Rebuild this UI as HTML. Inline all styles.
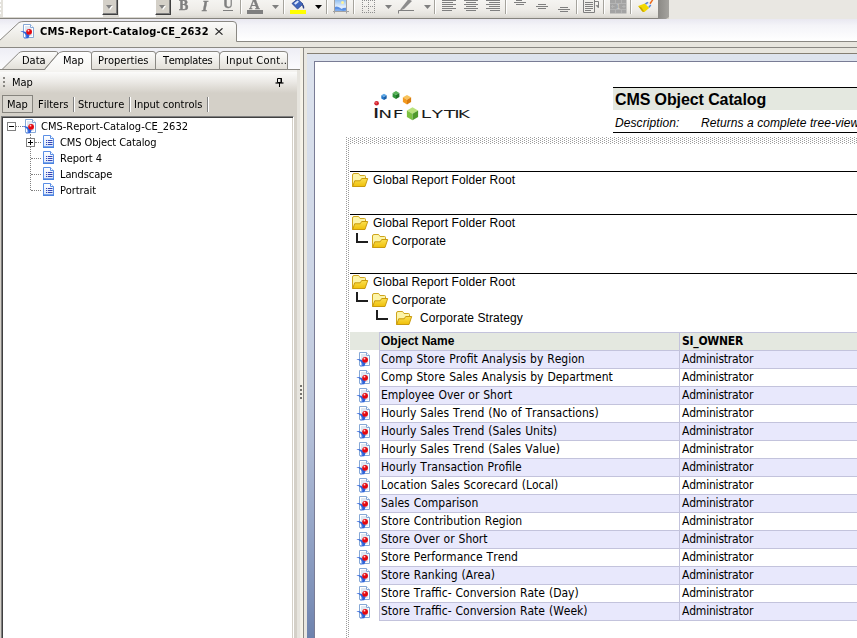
<!DOCTYPE html>
<html>
<head>
<meta charset="utf-8">
<title>CMS-Report-Catalog-CE_2632</title>
<style>
*{box-sizing:border-box;margin:0;padding:0}
html,body{width:857px;height:638px;overflow:hidden;background:#d4d0c8}
body{position:relative;font-family:"DejaVu Sans Condensed","DejaVu Sans","Liberation Sans",sans-serif;font-size:11px;color:#000}
.a{position:absolute}
.ui{font-kerning:none;will-change:transform;font-family:"DejaVu Sans Condensed","DejaVu Sans","Liberation Sans",sans-serif;font-size:11px;white-space:nowrap;line-height:14px;color:#000}
.ar{font-family:"Liberation Sans",sans-serif;white-space:nowrap;font-size:12px;line-height:14px;letter-spacing:.08px;color:#000}
.tx{font-kerning:none;word-spacing:.5px;font-family:"DejaVu Sans Condensed","DejaVu Sans","Liberation Sans",sans-serif;font-size:12px;white-space:nowrap;line-height:16px;color:#000}
#tb{left:0;top:0;width:658px;height:19px;background:linear-gradient(#f5f4f1,#efede9 50%,#e3e1db 85%,#d6d3cc);border-bottom:1px solid #85837d;overflow:hidden}
#tbend{left:658px;top:0;width:11px;height:19px;background:linear-gradient(90deg,#8b8985,#a5a39f);clip-path:polygon(0 0,100% 0,100% 17px,8px 19px,0 19px)}
#tbrest{left:669px;top:0;width:188px;height:19px;background:#e9e7e2}
.combo{top:0;height:17px;background:#fff}
.cbtn{top:-1px;height:16px;width:16px;background:#d4d0c8;border:1px solid;border-color:#fff #404040 #404040 #fff;box-shadow:inset -1px -1px 0 #808080}
.cbtn:before{content:"";position:absolute;left:4px;top:6px;border:3.5px solid transparent;border-top:4px solid #fff;border-bottom:0}
.cbtn:after{content:"";position:absolute;left:3px;top:5px;border:3.5px solid transparent;border-top:4px solid #808080;border-bottom:0}
.sep{top:0;width:2px;height:14px;border-left:1px solid #a5a39c;border-right:1px solid #fff}
#dt{left:0;top:19px;width:857px;height:22px;background:linear-gradient(#e9e8f1,#f4f4f8 30%,#ffffff)}
#dtl1{left:0;top:41px;width:857px;height:1px;background:#8a8883}
#dtb{left:0;top:42px;width:857px;height:5px;background:#e8e6df}
#dtl2{left:0;top:47px;width:857px;height:1px;background:#8a8883}
#lp{left:0;top:48px;width:297px;height:590px;background:#d4d0c8}
#lts{left:0;top:48px;width:300px;height:21px;background:linear-gradient(#eeeef5,#fbfbfd)}
#ltl{left:0;top:69px;width:300px;height:1px;background:#8a8883}
#lth{left:0;top:70px;width:300px;height:2px;background:#f4f3f0}
#mh{left:0;top:72px;width:297px;height:21px;background:linear-gradient(#fbfbfa,#eceae6 45%,#d4d0c8)}
#tree{left:1px;top:116px;width:293px;height:530px;background:#fff;border:1px solid #808080;border-right:1px solid #fff;box-shadow:inset 1px 1px 0 #404040,inset -1px 0 0 #d4d0c8}
#sp{left:297px;top:70px;width:10px;height:570px;background:linear-gradient(90deg,#e6e4de 0,#e6e4de 3px,#f1eee5 3px,#f9f6eb 6px)}
#rp{left:304px;top:48px;width:553px;height:590px;background:#e8e6df}
#rpl{left:306px;top:53px;width:551px;height:1px;background:#857f73}
#rpb{left:307px;top:54px;width:550px;height:584px;background:linear-gradient(#dee4ee 0,#cbd4e5 42.1%,#bfc9dd 56.7%,#b2bed7 66.1%,#98a8c9 79.8%,#7d90b8 93.5%,#6d82ad 100%)}
#pg{left:314px;top:61px;width:560px;height:600px;background:#fff;border:1px solid #797c95}
.dots{background-image:radial-gradient(circle at 0.5px 0.5px,#9a9a9a 0.6px,transparent 0.7px),radial-gradient(circle at 0.5px 0.5px,#9a9a9a 0.6px,transparent 0.7px);background-size:2px 2px;background-position:0 0,1px 1px}
.hl{height:1px;background:#000;left:350px;width:507px}
.rowbg{left:380px;width:477px;height:17px}
.bl{background:#c3c3dc}
</style>
</head>
<body>
<div class="a" id="tb"></div><div class="a" id="tbend"></div><div class="a" id="tbrest"></div>
<div class="a" style="left:0;top:0;width:3px;height:17px;background:#e4e2dc"></div>
<div class="a" style="left:0;top:0px;width:1px;height:2px;background:#fff"></div><div class="a" style="left:0;top:4px;width:1px;height:2px;background:#fff"></div><div class="a" style="left:0;top:8px;width:1px;height:2px;background:#fff"></div><div class="a" style="left:0;top:12px;width:1px;height:2px;background:#fff"></div>
<div class="a combo" style="left:3px;width:100px"></div><div class="a cbtn" style="left:102px"></div>
<div class="a combo" style="left:119px;width:37px"></div><div class="a cbtn" style="left:155px"></div>
<div class="a" style="will-change:transform;left:179px;top:-2px;font:bold 14px/16px 'Liberation Serif',serif;color:#7f7f7f;-webkit-text-stroke:.4px #7f7f7f">B</div>
<div class="a" style="will-change:transform;left:202px;top:-2px;font:italic bold 15px/16px 'Liberation Serif',serif;color:#7f7f7f;-webkit-text-stroke:.4px #7f7f7f">I</div>
<div class="a" style="will-change:transform;left:222.500px;top:-4px;font:bold 14px/16px 'Liberation Serif',serif;color:#7f7f7f;-webkit-text-stroke:.3px #7f7f7f">U</div>
<div class="a" style="will-change:transform;left:223px;top:10px;width:10px;height:1px;background:#7f7f7f"></div>
<div class="a sep" style="left:240px"></div>
<div class="a" style="will-change:transform;left:249px;top:-4px;font:bold 15px/16px 'Liberation Serif',serif;color:#7f7f7f;-webkit-text-stroke:.3px #7f7f7f">A</div>
<div class="a" style="will-change:transform;left:247px;top:10px;width:16px;height:4px;background:#7f7f7f"></div>
<svg class="a" style="left:272px;top:5px" width="7" height="4" viewBox="0 0 7 4"><path d="M0 0 H7 L3.500 4 Z" fill="#7f7f7f"/></svg>
<div class="a sep" style="left:283px"></div>
<svg class="a" style="left:289px;top:0" width="18" height="14" viewBox="0 0 18 14"><path d="M3 3.500 L8.500 -1 L14 4 L8.500 9 Z" fill="#3f66bd" stroke="#27408a" stroke-width=".8"/><path d="M5 3.300 L8.500 0.400 L10 1.800 L6.500 4.800 Z" fill="#dbe6fb"/><path d="M13.500 4 Q16 6 15 9 Q13.500 8 13 5 Z" fill="#27408a"/><rect x="1" y="10" width="16" height="4" fill="#ffff00"/></svg>
<svg class="a" style="left:315px;top:5px" width="7" height="4" viewBox="0 0 7 4"><path d="M0 0 H7 L3.500 4 Z" fill="#000"/></svg>
<div class="a sep" style="left:326px"></div>
<svg class="a" style="left:332px;top:0" width="18" height="14" viewBox="0 0 18 14"><defs><linearGradient id="sky" x1="0" y1="0" x2="0" y2="1"><stop offset="0" stop-color="#86b8ef"/><stop offset=".62" stop-color="#e4effc"/><stop offset="1" stop-color="#cfe2fa"/></linearGradient></defs><rect x="2.500" y="-1" width="12" height="12.500" fill="url(#sky)"/><path d="M2.500 7.200 Q4.500 6 6.500 7 T9.500 9 Q11 7.600 14.500 7.800 V11.500 H2.500 Z" fill="#5a90e4"/><path d="M2.500 9.500 Q6 8.500 9 10 T14.500 9.500 V11.500 H2.500 Z" fill="#7fabec"/><circle cx="10.500" cy="2.500" r="1.500" fill="#fdf49c"/><path d="M2.500 -1 V13.500 M14.500 -1 V13.500" stroke="#a2a2a2"/><path d="M1 11.500 H17" stroke="#a2a2a2"/></svg>
<div class="a sep" style="left:353px"></div>
<svg class="a" style="left:362px;top:0" width="13" height="13" viewBox="0 0 13 13" shape-rendering="crispEdges"><g fill="#8e8e8e"><rect x="0" y="0" width="1" height="1"/><rect x="2" y="0" width="1" height="1"/><rect x="4" y="0" width="1" height="1"/><rect x="6" y="0" width="1" height="1"/><rect x="8" y="0" width="1" height="1"/><rect x="10" y="0" width="1" height="1"/><rect x="12" y="0" width="1" height="1"/><rect x="0" y="6" width="1" height="1"/><rect x="2" y="6" width="1" height="1"/><rect x="4" y="6" width="1" height="1"/><rect x="6" y="6" width="1" height="1"/><rect x="8" y="6" width="1" height="1"/><rect x="10" y="6" width="1" height="1"/><rect x="12" y="6" width="1" height="1"/><rect x="0" y="12" width="1" height="1"/><rect x="2" y="12" width="1" height="1"/><rect x="4" y="12" width="1" height="1"/><rect x="6" y="12" width="1" height="1"/><rect x="8" y="12" width="1" height="1"/><rect x="10" y="12" width="1" height="1"/><rect x="12" y="12" width="1" height="1"/><rect x="0" y="2" width="1" height="1"/><rect x="0" y="4" width="1" height="1"/><rect x="0" y="8" width="1" height="1"/><rect x="0" y="10" width="1" height="1"/><rect x="6" y="2" width="1" height="1"/><rect x="6" y="4" width="1" height="1"/><rect x="6" y="8" width="1" height="1"/><rect x="6" y="10" width="1" height="1"/><rect x="12" y="2" width="1" height="1"/><rect x="12" y="4" width="1" height="1"/><rect x="12" y="8" width="1" height="1"/><rect x="12" y="10" width="1" height="1"/></g></svg>
<svg class="a" style="left:385px;top:5px" width="7" height="4" viewBox="0 0 7 4"><path d="M0 0 H7 L3.500 4 Z" fill="#7f7f7f"/></svg>
<svg class="a" style="left:397px;top:0" width="18" height="14" viewBox="0 0 18 14"><path d="M4 8.500 L11.500 -1 L15 1 L7 9 Z" fill="#8c8c8c"/><path d="M4 8.500 L3.300 10 L7 9 Z" fill="#666"/><path d="M1.500 13.500 V10.500 H17" fill="none" stroke="#7f7f7f"/></svg>
<svg class="a" style="left:424px;top:5px" width="7" height="4" viewBox="0 0 7 4"><path d="M0 0 H7 L3.500 4 Z" fill="#7f7f7f"/></svg>
<div class="a sep" style="left:434px"></div>
<svg class="a" style="left:441px;top:0" width="16" height="14" viewBox="0 0 16 14"><path d="M1 0.5 H15 M1 2.5 H12 M1 4.5 H15 M1 6.5 H12 M1 8.5 H15 M1 10.5 H11 " stroke="#7f7f7f" stroke-width="1" fill="none"/></svg>
<svg class="a" style="left:463px;top:0" width="16" height="14" viewBox="0 0 16 14"><path d="M1 0.5 H15 M3 2.5 H13 M1 4.5 H15 M3 6.5 H13 M1 8.5 H15 M3 10.5 H13 " stroke="#7f7f7f" stroke-width="1" fill="none"/></svg>
<svg class="a" style="left:485px;top:0" width="16" height="14" viewBox="0 0 16 14"><path d="M1 0.5 H15 M4 2.5 H15 M1 4.5 H15 M4 6.5 H15 M1 8.5 H15 M5 10.5 H15 " stroke="#7f7f7f" stroke-width="1" fill="none"/></svg>
<div class="a sep" style="left:505px"></div>
<svg class="a" style="left:512px;top:0" width="16" height="14" viewBox="0 0 16 14"><path d="M4 0.5 H10 M2 2.5 H14 M4 4.5 H12 " stroke="#7f7f7f" stroke-width="1" fill="none"/></svg>
<svg class="a" style="left:534px;top:0" width="16" height="14" viewBox="0 0 16 14"><path d="M4 4.5 H12 M2 6.5 H14 M4 8.5 H12 " stroke="#7f7f7f" stroke-width="1" fill="none"/></svg>
<svg class="a" style="left:556px;top:0" width="16" height="14" viewBox="0 0 16 14"><path d="M4 7.5 H12 M2 9.5 H14 M4 11.5 H12 " stroke="#7f7f7f" stroke-width="1" fill="none"/></svg>
<div class="a sep" style="left:576px"></div>
<svg class="a" style="left:582px;top:0" width="19" height="14" viewBox="0 0 19 14"><path d="M1.500 -1 V12.500 H12.500 V-1" fill="#efeeea" stroke="#7f7f7f"/><path d="M3 2.500 H11 M3 4.500 H11 M3 6.500 H11 M3 8.500 H11 M3 10.500 H9" stroke="#7f7f7f"/><path d="M12.500 1.500 H16.500 V7" fill="none" stroke="#7f7f7f"/><path d="M14 5.500 L16.500 8 V5.500 Z" fill="#7f7f7f" stroke="#7f7f7f" stroke-width=".6"/></svg>
<div class="a sep" style="left:603px"></div>
<svg class="a" style="left:610px;top:0" width="17" height="14" viewBox="0 0 17 14"><rect x="0" y="-1" width="16.500" height="14.500" fill="#a3a3a3"/><g stroke="#b4b4b4" stroke-width="1" fill="none"><path d="M5.500 0 V3 M11.500 0 V3 M5.500 10 V13 M11.500 10 V13 M0 3.500 H16 M0 9.500 H16"/><path d="M1 6.500 H4.500 M12 6.500 H15.500 M2.500 5 V8 M14 5 V8"/></g><text x="6.200" y="9" font-family="Liberation Sans, sans-serif" font-size="7" fill="#d0d0d0">1</text></svg>
<div class="a sep" style="left:630px"></div>
<svg class="a" style="left:637px;top:0" width="18" height="13" viewBox="0 0 18 13"><path d="M12.300 3.300 L15.500 -1 L16.600 -0.300 L13.600 4.300 Z" fill="#ee6a1a"/><path d="M7.800 3.600 L10.400 1.800 L14.300 5.600 L12.200 7.900 Z" fill="#e4ecf9"/><path d="M10.400 1.800 L11.600 2.800 L9 4.700 L7.800 3.600 Z" fill="#5b86d6"/><path d="M13.200 4.600 L14.300 5.600 L12.200 7.900 L11.200 7 Z" fill="#5b86d6"/><path d="M1.200 6 L7.800 3.600 L12.200 7.900 L7.400 12 L5.300 11.600 Z" fill="#f2d800"/><path d="M1.200 6 L5.300 11.600 L7.400 12 L4.500 7.600 Z" fill="#c6a400"/></svg>
<div class="a" id="dt"></div><div class="a" id="dtl1"></div><div class="a" id="dtb"></div><div class="a" id="dtl2"></div>
<svg class="a" style="left:0;top:18px" width="240" height="24" viewBox="0 0 240 24"><defs><linearGradient id="tg" x1="0" y1="0" x2="0" y2="1"><stop offset="0" stop-color="#fbfbfa"/><stop offset="1" stop-color="#e8e6df"/></linearGradient></defs><path d="M-2 24 L19 4.500 Q21 3.500 24 3.500 L233 3.500 Q236.500 3.500 236.500 7 L236.500 24 Z" fill="url(#tg)" stroke="none"/><path d="M-2 24 L19 4.500 Q21 3.500 24 3.500 L233 3.500 Q236.500 3.500 236.500 7 L236.500 23.500" fill="none" stroke="#8a8883" stroke-width="1"/></svg>
<svg class="a" style="left:20px;top:24px" width="15" height="15" viewBox="0 0 15 15"><path d="M3.500 0.500 L10.500 0.500 L13.500 3.500 L13.500 13.500 L3.500 13.500 Z" fill="#fff" stroke="#86a8d6" stroke-width="1"/><path d="M5 2 H10 V4.500 H12 V12 H5 Z" fill="#dfe7f2"/><path d="M10.500 0.500 L10.500 3.500 L13.500 3.500" fill="#fff" stroke="#86a8d6" stroke-width="1"/><path d="M0.800 6.900 C3.500 6.800 6.500 7.600 8.600 10.200 L9.600 11.200 L8.300 14.200 L4 14.400 C5.800 13 6.300 11.800 5.300 10.400 C4.200 8.800 2.500 7.700 0.800 7.500 Z" fill="#2e63d9"/><path d="M4 14.400 C5.800 13 6.300 11.800 5.300 10.400 L6.500 12 L6 14.300 Z" fill="#7ea6ee"/><circle cx="9.100" cy="7.800" r="2.900" fill="#e5080f"/><circle cx="8.500" cy="6.700" r="0.900" fill="#ffd0d0"/></svg>
<div class="a ui" style="left:40px;top:25px;font-weight:bold;letter-spacing:.2px">CMS-Report-Catalog-CE_2632</div>
<svg class="a" style="left:215px;top:28px" width="8" height="7" viewBox="0 0 8 7"><path d="M0.500 0.300 L7.500 6.700 M7.500 0.300 L0.500 6.700" stroke="#2a2a2a" stroke-width="1.150" fill="none"/></svg>
<div class="a" id="lp"></div><div class="a" id="lts"></div><div class="a" id="ltl"></div><div class="a" id="lth"></div><div class="a" id="mh"></div>
<svg class="a" style="left:0;top:48px" width="300" height="23" viewBox="0 0 300 23">
<defs><linearGradient id="lg" x1="0" y1="0" x2="0" y2="1"><stop offset="0" stop-color="#fdfdfc"/><stop offset="1" stop-color="#e2dfd8"/></linearGradient>
<linearGradient id="lgs" x1="0" y1="0" x2="0" y2="1"><stop offset="0" stop-color="#ffffff"/><stop offset="1" stop-color="#f6f5f2"/></linearGradient></defs>
<path d="M2 21.500 L18.500 5.300 Q20.300 3.500 23 3.500 L55 3.500 Q59 3.500 57.200 6.300 L44.500 21.500 Z" fill="url(#lg)" stroke="#8a8883"/>
<path d="M91.500 21.500 L91.500 6 Q91.500 3.500 94 3.500 L153 3.500 Q155.500 3.500 155.500 6 L155.500 21.500 Z" fill="url(#lg)" stroke="#8a8883"/>
<path d="M155.500 21.500 L155.500 7 Q156 4 159 3.500 L217 3.500 Q219.500 3.500 219.500 6 L219.500 21.500 Z" fill="url(#lg)" stroke="#8a8883"/>
<path d="M219.500 21.500 L219.500 7 Q220 4 223 3.500 L284 3.500 Q287.500 3.500 287.500 6 L287.500 21.500 Z" fill="url(#lg)" stroke="#8a8883"/>
<path d="M44.500 22.500 L57 7 Q59.500 3.500 63 3.500 L88 3.500 Q91.500 3.500 91.500 6 L91.500 22.500 Z" fill="url(#lgs)" stroke="none"/>
<path d="M44.500 21.500 L57 7 Q59.500 3.500 63 3.500 L88 3.500 Q91.500 3.500 91.500 6 L91.500 21.500" fill="none" stroke="#8a8883"/>
</svg>
<div class="a ui" style="left:22px;top:54px;letter-spacing:0">Data</div>
<div class="a ui" style="left:63px;top:54px;letter-spacing:0">Map</div>
<div class="a ui" style="left:98px;top:54px;letter-spacing:0">Properties</div>
<div class="a ui" style="left:163px;top:54px;letter-spacing:-.3px">Templates</div>
<div class="a ui" style="left:226px;top:54px;letter-spacing:.25px">Input Cont..</div>
<div class="a" style="left:3px;top:77px;width:2px;height:2px;background:#8a8883"></div><div class="a" style="left:3px;top:81px;width:2px;height:2px;background:#8a8883"></div><div class="a" style="left:3px;top:85px;width:2px;height:2px;background:#8a8883"></div>
<div class="a ui" style="left:12px;top:76px">Map</div>
<svg class="a" style="left:275px;top:76px" width="9" height="12" viewBox="0 0 9 12"><path d="M2.500 2.500 H6.500 V6.500 H2.500 Z" fill="none" stroke="#000"/><path d="M6 2 V7" stroke="#000"/><path d="M0.500 7 H8.500" stroke="#000" stroke-width="1.200"/><path d="M4.500 7 V11" stroke="#000"/></svg>
<div class="a" style="left:2px;top:95px;width:31px;height:18px;border:1px solid #86847e;background:#d9d6cf"></div>
<div class="a ui" style="left:7px;top:98px">Map</div>
<div class="a ui" style="left:38px;top:98px">Filters</div>
<div class="a ui" style="left:78px;top:98px">Structure</div>
<div class="a ui" style="left:134px;top:98px">Input controls</div>
<div class="a" style="left:73px;top:97px;width:2px;height:15px;border-left:1px solid #808080;border-right:1px solid #fff"></div>
<div class="a" style="left:129px;top:97px;width:2px;height:15px;border-left:1px solid #808080;border-right:1px solid #fff"></div>
<div class="a" style="left:207px;top:97px;width:2px;height:15px;border-left:1px solid #808080;border-right:1px solid #fff"></div>
<div class="a" id="tree"></div>
<div class="a" style="left:7px;top:122px;width:9px;height:9px;border:1px solid #808080;background:#fff"></div><div class="a" style="left:9px;top:126px;width:5px;height:1px;background:#000"></div>
<div class="a" style="left:16px;top:126px;width:7px;height:1px;border-top:1px dotted #808080"></div>
<div class="a" style="left:30px;top:134px;width:1px;height:56px;border-left:1px dotted #808080"></div>
<svg class="a" style="left:22px;top:119px" width="15" height="15" viewBox="0 0 15 15"><path d="M3.500 0.500 L10.500 0.500 L13.500 3.500 L13.500 13.500 L3.500 13.500 Z" fill="#fff" stroke="#86a8d6" stroke-width="1"/><path d="M5 2 H10 V4.500 H12 V12 H5 Z" fill="#dfe7f2"/><path d="M10.500 0.500 L10.500 3.500 L13.500 3.500" fill="#fff" stroke="#86a8d6" stroke-width="1"/><path d="M0.800 6.900 C3.500 6.800 6.500 7.600 8.600 10.200 L9.600 11.200 L8.300 14.200 L4 14.400 C5.800 13 6.300 11.800 5.300 10.400 C4.200 8.800 2.500 7.700 0.800 7.500 Z" fill="#2e63d9"/><path d="M4 14.400 C5.800 13 6.300 11.800 5.300 10.400 L6.500 12 L6 14.300 Z" fill="#7ea6ee"/><circle cx="9.100" cy="7.800" r="2.900" fill="#e5080f"/><circle cx="8.500" cy="6.700" r="0.900" fill="#ffd0d0"/></svg>
<div class="a ui" style="left:41px;top:120px">CMS-Report-Catalog-CE_2632</div>
<div class="a" style="left:26px;top:138px;width:9px;height:9px;border:1px solid #808080;background:#fff"></div><div class="a" style="left:28px;top:142px;width:5px;height:1px;background:#000"></div><div class="a" style="left:30px;top:140px;width:1px;height:5px;background:#000"></div>
<div class="a" style="left:35px;top:142px;width:6px;height:1px;border-top:1px dotted #808080"></div>
<svg class="a" style="left:43px;top:135px" width="11" height="13" viewBox="0 0 11 13"><defs><linearGradient id="pgf" x1="0" y1="0" x2="0" y2="1"><stop offset="0" stop-color="#ffffff"/><stop offset="1" stop-color="#dce8fb"/></linearGradient></defs><path d="M0.500 0.500 L7.500 0.500 L10.500 3.500 L10.500 12 L0.500 12 Z" fill="url(#pgf)" stroke="#5a8fe6" stroke-width="1"/><path d="M0 12.300 H11" stroke="#4a82e0" stroke-width="1.400"/><path d="M7.500 0.500 L7.500 3.500 L10.500 3.500" fill="#fff" stroke="#5a8fe6" stroke-width="1"/><path d="M5 5.500h4.500M5 7.500h4.500M5 9.500h4.500" stroke="#3546b5" stroke-width="1"/><path d="M3 5.500h1.200M3 7.500h1.200M3 9.500h1.200" stroke="#3546b5" stroke-width="1"/></svg>
<div class="a ui" style="left:60px;top:136px;letter-spacing:-.1px">CMS Object Catalog</div>
<svg class="a" style="left:43px;top:151px" width="11" height="13" viewBox="0 0 11 13"><defs><linearGradient id="pgf" x1="0" y1="0" x2="0" y2="1"><stop offset="0" stop-color="#ffffff"/><stop offset="1" stop-color="#dce8fb"/></linearGradient></defs><path d="M0.500 0.500 L7.500 0.500 L10.500 3.500 L10.500 12 L0.500 12 Z" fill="url(#pgf)" stroke="#5a8fe6" stroke-width="1"/><path d="M0 12.300 H11" stroke="#4a82e0" stroke-width="1.400"/><path d="M7.500 0.500 L7.500 3.500 L10.500 3.500" fill="#fff" stroke="#5a8fe6" stroke-width="1"/><path d="M5 5.500h4.500M5 7.500h4.500M5 9.500h4.500" stroke="#3546b5" stroke-width="1"/><path d="M3 5.500h1.200M3 7.500h1.200M3 9.500h1.200" stroke="#3546b5" stroke-width="1"/></svg>
<div class="a ui" style="left:60px;top:152px;letter-spacing:-.1px">Report 4</div>
<div class="a" style="left:31px;top:158px;width:10px;height:1px;border-top:1px dotted #808080"></div>
<svg class="a" style="left:43px;top:167px" width="11" height="13" viewBox="0 0 11 13"><defs><linearGradient id="pgf" x1="0" y1="0" x2="0" y2="1"><stop offset="0" stop-color="#ffffff"/><stop offset="1" stop-color="#dce8fb"/></linearGradient></defs><path d="M0.500 0.500 L7.500 0.500 L10.500 3.500 L10.500 12 L0.500 12 Z" fill="url(#pgf)" stroke="#5a8fe6" stroke-width="1"/><path d="M0 12.300 H11" stroke="#4a82e0" stroke-width="1.400"/><path d="M7.500 0.500 L7.500 3.500 L10.500 3.500" fill="#fff" stroke="#5a8fe6" stroke-width="1"/><path d="M5 5.500h4.500M5 7.500h4.500M5 9.500h4.500" stroke="#3546b5" stroke-width="1"/><path d="M3 5.500h1.200M3 7.500h1.200M3 9.500h1.200" stroke="#3546b5" stroke-width="1"/></svg>
<div class="a ui" style="left:60px;top:168px;letter-spacing:-.1px">Landscape</div>
<div class="a" style="left:31px;top:174px;width:10px;height:1px;border-top:1px dotted #808080"></div>
<svg class="a" style="left:43px;top:183px" width="11" height="13" viewBox="0 0 11 13"><defs><linearGradient id="pgf" x1="0" y1="0" x2="0" y2="1"><stop offset="0" stop-color="#ffffff"/><stop offset="1" stop-color="#dce8fb"/></linearGradient></defs><path d="M0.500 0.500 L7.500 0.500 L10.500 3.500 L10.500 12 L0.500 12 Z" fill="url(#pgf)" stroke="#5a8fe6" stroke-width="1"/><path d="M0 12.300 H11" stroke="#4a82e0" stroke-width="1.400"/><path d="M7.500 0.500 L7.500 3.500 L10.500 3.500" fill="#fff" stroke="#5a8fe6" stroke-width="1"/><path d="M5 5.500h4.500M5 7.500h4.500M5 9.500h4.500" stroke="#3546b5" stroke-width="1"/><path d="M3 5.500h1.200M3 7.500h1.200M3 9.500h1.200" stroke="#3546b5" stroke-width="1"/></svg>
<div class="a ui" style="left:60px;top:184px;letter-spacing:-.1px">Portrait</div>
<div class="a" style="left:31px;top:190px;width:10px;height:1px;border-top:1px dotted #808080"></div>
<div class="a" id="sp"></div><div class="a" style="left:300px;top:48px;width:3px;height:24px;background:#f4f1e7"></div>
<div class="a" style="left:303px;top:48px;width:1px;height:590px;background:#8a8883"></div>
<div class="a" style="left:300px;top:385px;width:2px;height:2px;background:#77756f"></div>
<div class="a" style="left:300px;top:389px;width:2px;height:2px;background:#77756f"></div>
<div class="a" style="left:300px;top:393px;width:2px;height:2px;background:#77756f"></div>
<div class="a" style="left:300px;top:397px;width:2px;height:2px;background:#77756f"></div>
<div class="a" id="rp"></div><div class="a" id="rpl"></div><div class="a" id="rpb"></div><div class="a" id="pg"></div>
<div class="a" style="left:304px;top:48px;width:3px;height:590px;background:#e9e7e0"></div>
<svg class="a" style="left:370px;top:88px" width="110" height="34" viewBox="0 0 110 34"><circle cx="6.600" cy="15.300" r="2.300" fill="#d3202a"/><circle cx="6.200" cy="14.800" r="1" fill="#e8606a"/><path d="M14.0 5.8 L16.7 7.3 L14.0 8.9 L11.3 7.3 Z" fill="#5aa7e6"/><path d="M11.3 7.3 L14.0 8.9 L14.0 12.0 L11.3 10.5 Z" fill="#2477c9"/><path d="M16.7 7.3 L16.7 10.4 L14.0 12.0 L14.0 8.9 Z" fill="#1a5fa8"/><path d="M26.0 3.1 L29.4 5.0 L26.0 7.0 L22.6 5.0 Z" fill="#56b356"/><path d="M22.6 5.0 L26.0 7.0 L26.0 10.9 L22.6 9.0 Z" fill="#2f9438"/><path d="M29.4 5.0 L29.4 8.9 L26.0 10.9 L26.0 7.0 Z" fill="#1f7428"/><path d="M37.0 7.0 L41.1 9.3 L37.0 11.7 L32.9 9.3 Z" fill="#f8c35c"/><path d="M32.9 9.3 L37.0 11.7 L37.0 16.4 L32.9 14.1 Z" fill="#f39a1f"/><path d="M41.1 9.3 L41.1 14.0 L37.0 16.4 L37.0 11.7 Z" fill="#d97d10"/><path d="M42.5 19.2 L48.1 22.4 L42.5 25.7 L36.9 22.4 Z" fill="#b9e27c"/><path d="M36.9 22.4 L42.5 25.7 L42.5 32.2 L36.9 29.0 Z" fill="#7cc142"/><path d="M48.1 22.4 L48.1 28.9 L42.5 32.2 L42.5 25.7 Z" fill="#4f9a2b"/><g transform="scale(1.8,1)"><text x="1.44" y="30" font-family="DejaVu Sans, Liberation Sans, sans-serif" font-size="13.6" fill="#1c1c1c">I</text><text x="4.56 12.67" y="30" font-family="DejaVu Sans, Liberation Sans, sans-serif" font-size="10.3" fill="#1c1c1c">NF</text><text x="28.17 34.33 41.11 46.83 48.78" y="30" font-family="DejaVu Sans, Liberation Sans, sans-serif" font-size="10.3" fill="#1c1c1c">LYTIK</text></g></svg>
<div class="a" style="left:613px;top:87px;width:244px;height:1px;background:#000"></div>
<div class="a" style="left:613px;top:88px;width:244px;height:22px;background:#e4e8e0"></div>
<div class="a ar" style="left:615px;top:90px;font-size:16px;font-weight:bold;line-height:20px;letter-spacing:-.1px">CMS Object Catalog</div>
<div class="a ar" style="left:615px;top:116px;font-style:italic">Description:</div>
<div class="a ar" style="left:701px;top:116px;font-style:italic">Returns a complete tree-view of the CMS</div>
<div class="a" style="left:613px;top:132px;width:244px;height:1px;background:#000"></div>
<svg class="a" style="left:346px;top:137px" width="511" height="501" shape-rendering="crispEdges"><defs><pattern id="dp" width="4" height="2" patternUnits="userSpaceOnUse"><rect x="0" y="0" width="1" height="1" fill="#9c9c9c"/><rect x="2" y="1" width="1" height="1" fill="#9c9c9c"/></pattern></defs><rect x="0" y="0" width="511" height="7" fill="url(#dp)"/><rect x="0" y="7" width="3" height="494" fill="url(#dp)"/></svg>
<div class="a hl" style="top:171px"></div><svg class="a" style="left:352px;top:173px" width="17" height="14" viewBox="0 0 17 14"><defs><linearGradient id="ff" x1="0" y1="0" x2="0" y2="1"><stop offset="0" stop-color="#fbe050"/><stop offset="1" stop-color="#efbf08"/></linearGradient></defs><path d="M0.500 13.500 L0.500 2 Q0.500 0.500 2 0.500 L6 0.500 Q7 0.500 7.500 1.500 L8 2.500 L12.500 2.500 Q13.500 2.500 13.500 3.500 L13.500 8 L3.500 10 Z" fill="#fcf4a8" stroke="#cfa51c" stroke-width="1"/><path d="M0.700 13.500 L2.700 7.800 L8.200 7.800 L9.700 5.500 L15.700 5.500 L13 13.500 Z" fill="url(#ff)" stroke="#c99a0e" stroke-width="1" stroke-linejoin="round"/></svg><div class="a ar" style="left:373px;top:173px">Global Report Folder Root</div>
<div class="a hl" style="top:214px"></div><svg class="a" style="left:352px;top:216px" width="17" height="14" viewBox="0 0 17 14"><defs><linearGradient id="ff" x1="0" y1="0" x2="0" y2="1"><stop offset="0" stop-color="#fbe050"/><stop offset="1" stop-color="#efbf08"/></linearGradient></defs><path d="M0.500 13.500 L0.500 2 Q0.500 0.500 2 0.500 L6 0.500 Q7 0.500 7.500 1.500 L8 2.500 L12.500 2.500 Q13.500 2.500 13.500 3.500 L13.500 8 L3.500 10 Z" fill="#fcf4a8" stroke="#cfa51c" stroke-width="1"/><path d="M0.700 13.500 L2.700 7.800 L8.200 7.800 L9.700 5.500 L15.700 5.500 L13 13.500 Z" fill="url(#ff)" stroke="#c99a0e" stroke-width="1" stroke-linejoin="round"/></svg><div class="a ar" style="left:373px;top:216px">Global Report Folder Root</div>
<div class="a" style="left:356px;top:233px;width:12px;height:10px;border-left:2px solid #1e1e1e;border-bottom:2px solid #1e1e1e"></div><svg class="a" style="left:372px;top:234px" width="17" height="14" viewBox="0 0 17 14"><defs><linearGradient id="ff" x1="0" y1="0" x2="0" y2="1"><stop offset="0" stop-color="#fbe050"/><stop offset="1" stop-color="#efbf08"/></linearGradient></defs><path d="M0.500 13.500 L0.500 2 Q0.500 0.500 2 0.500 L6 0.500 Q7 0.500 7.500 1.500 L8 2.500 L12.500 2.500 Q13.500 2.500 13.500 3.500 L13.500 8 L3.500 10 Z" fill="#fcf4a8" stroke="#cfa51c" stroke-width="1"/><path d="M0.700 13.500 L2.700 7.800 L8.200 7.800 L9.700 5.500 L15.700 5.500 L13 13.500 Z" fill="url(#ff)" stroke="#c99a0e" stroke-width="1" stroke-linejoin="round"/></svg><div class="a ar" style="left:392px;top:234px">Corporate</div>
<div class="a hl" style="top:273px"></div><svg class="a" style="left:352px;top:275px" width="17" height="14" viewBox="0 0 17 14"><defs><linearGradient id="ff" x1="0" y1="0" x2="0" y2="1"><stop offset="0" stop-color="#fbe050"/><stop offset="1" stop-color="#efbf08"/></linearGradient></defs><path d="M0.500 13.500 L0.500 2 Q0.500 0.500 2 0.500 L6 0.500 Q7 0.500 7.500 1.500 L8 2.500 L12.500 2.500 Q13.500 2.500 13.500 3.500 L13.500 8 L3.500 10 Z" fill="#fcf4a8" stroke="#cfa51c" stroke-width="1"/><path d="M0.700 13.500 L2.700 7.800 L8.200 7.800 L9.700 5.500 L15.700 5.500 L13 13.500 Z" fill="url(#ff)" stroke="#c99a0e" stroke-width="1" stroke-linejoin="round"/></svg><div class="a ar" style="left:373px;top:275px">Global Report Folder Root</div>
<div class="a" style="left:356px;top:292px;width:12px;height:10px;border-left:2px solid #1e1e1e;border-bottom:2px solid #1e1e1e"></div><svg class="a" style="left:372px;top:293px" width="17" height="14" viewBox="0 0 17 14"><defs><linearGradient id="ff" x1="0" y1="0" x2="0" y2="1"><stop offset="0" stop-color="#fbe050"/><stop offset="1" stop-color="#efbf08"/></linearGradient></defs><path d="M0.500 13.500 L0.500 2 Q0.500 0.500 2 0.500 L6 0.500 Q7 0.500 7.500 1.500 L8 2.500 L12.500 2.500 Q13.500 2.500 13.500 3.500 L13.500 8 L3.500 10 Z" fill="#fcf4a8" stroke="#cfa51c" stroke-width="1"/><path d="M0.700 13.500 L2.700 7.800 L8.200 7.800 L9.700 5.500 L15.700 5.500 L13 13.500 Z" fill="url(#ff)" stroke="#c99a0e" stroke-width="1" stroke-linejoin="round"/></svg><div class="a ar" style="left:392px;top:293px">Corporate</div>
<div class="a" style="left:376px;top:310px;width:12px;height:10px;border-left:2px solid #1e1e1e;border-bottom:2px solid #1e1e1e"></div><svg class="a" style="left:396px;top:311px" width="17" height="14" viewBox="0 0 17 14"><defs><linearGradient id="ff" x1="0" y1="0" x2="0" y2="1"><stop offset="0" stop-color="#fbe050"/><stop offset="1" stop-color="#efbf08"/></linearGradient></defs><path d="M0.500 13.500 L0.500 2 Q0.500 0.500 2 0.500 L6 0.500 Q7 0.500 7.500 1.500 L8 2.500 L12.500 2.500 Q13.500 2.500 13.500 3.500 L13.500 8 L3.500 10 Z" fill="#fcf4a8" stroke="#cfa51c" stroke-width="1"/><path d="M0.700 13.500 L2.700 7.800 L8.200 7.800 L9.700 5.500 L15.700 5.500 L13 13.500 Z" fill="url(#ff)" stroke="#c99a0e" stroke-width="1" stroke-linejoin="round"/></svg><div class="a ar" style="left:420px;top:311px">Corporate Strategy</div>
<div class="a" style="left:350px;top:332px;width:507px;height:18px;background:#e4e8e0"></div>
<div class="a ar" style="left:381px;top:334px;font-weight:bold;letter-spacing:0">Object Name</div>
<div class="a tx" style="left:682px;top:333px;font-weight:bold;letter-spacing:-.25px">SI_OWNER</div>
<div class="a rowbg" style="top:351px;background:#e8e8fc"></div>
<svg class="a" style="left:356px;top:352px" width="15" height="15" viewBox="0 0 15 15"><path d="M3.500 0.500 L10.500 0.500 L13.500 3.500 L13.500 13.500 L3.500 13.500 Z" fill="#fff" stroke="#86a8d6" stroke-width="1"/><path d="M5 2 H10 V4.500 H12 V12 H5 Z" fill="#dfe7f2"/><path d="M10.500 0.500 L10.500 3.500 L13.500 3.500" fill="#fff" stroke="#86a8d6" stroke-width="1"/><path d="M0.800 6.900 C3.500 6.800 6.500 7.600 8.600 10.200 L9.600 11.200 L8.300 14.200 L4 14.400 C5.800 13 6.300 11.800 5.300 10.400 C4.200 8.800 2.500 7.700 0.800 7.500 Z" fill="#2e63d9"/><path d="M4 14.400 C5.800 13 6.300 11.800 5.300 10.400 L6.500 12 L6 14.300 Z" fill="#7ea6ee"/><circle cx="9.100" cy="7.800" r="2.900" fill="#e5080f"/><circle cx="8.500" cy="6.700" r="0.900" fill="#ffd0d0"/></svg>
<div class="a tx" style="left:381px;top:351px">Comp Store Profit Analysis by Region</div><div class="a tx" style="left:682px;top:351px;letter-spacing:-.2px">Administrator</div>
<div class="a rowbg" style="top:369px;background:#ffffff"></div>
<svg class="a" style="left:356px;top:370px" width="15" height="15" viewBox="0 0 15 15"><path d="M3.500 0.500 L10.500 0.500 L13.500 3.500 L13.500 13.500 L3.500 13.500 Z" fill="#fff" stroke="#86a8d6" stroke-width="1"/><path d="M5 2 H10 V4.500 H12 V12 H5 Z" fill="#dfe7f2"/><path d="M10.500 0.500 L10.500 3.500 L13.500 3.500" fill="#fff" stroke="#86a8d6" stroke-width="1"/><path d="M0.800 6.900 C3.500 6.800 6.500 7.600 8.600 10.200 L9.600 11.200 L8.300 14.200 L4 14.400 C5.800 13 6.300 11.800 5.300 10.400 C4.200 8.800 2.500 7.700 0.800 7.500 Z" fill="#2e63d9"/><path d="M4 14.400 C5.800 13 6.300 11.800 5.300 10.400 L6.500 12 L6 14.300 Z" fill="#7ea6ee"/><circle cx="9.100" cy="7.800" r="2.900" fill="#e5080f"/><circle cx="8.500" cy="6.700" r="0.900" fill="#ffd0d0"/></svg>
<div class="a tx" style="left:381px;top:369px">Comp Store Sales Analysis by Department</div><div class="a tx" style="left:682px;top:369px;letter-spacing:-.2px">Administrator</div>
<div class="a rowbg" style="top:387px;background:#e8e8fc"></div>
<svg class="a" style="left:356px;top:388px" width="15" height="15" viewBox="0 0 15 15"><path d="M3.500 0.500 L10.500 0.500 L13.500 3.500 L13.500 13.500 L3.500 13.500 Z" fill="#fff" stroke="#86a8d6" stroke-width="1"/><path d="M5 2 H10 V4.500 H12 V12 H5 Z" fill="#dfe7f2"/><path d="M10.500 0.500 L10.500 3.500 L13.500 3.500" fill="#fff" stroke="#86a8d6" stroke-width="1"/><path d="M0.800 6.900 C3.500 6.800 6.500 7.600 8.600 10.200 L9.600 11.200 L8.300 14.200 L4 14.400 C5.800 13 6.300 11.800 5.300 10.400 C4.200 8.800 2.500 7.700 0.800 7.500 Z" fill="#2e63d9"/><path d="M4 14.400 C5.800 13 6.300 11.800 5.300 10.400 L6.500 12 L6 14.300 Z" fill="#7ea6ee"/><circle cx="9.100" cy="7.800" r="2.900" fill="#e5080f"/><circle cx="8.500" cy="6.700" r="0.900" fill="#ffd0d0"/></svg>
<div class="a tx" style="left:381px;top:387px">Employee Over or Short</div><div class="a tx" style="left:682px;top:387px;letter-spacing:-.2px">Administrator</div>
<div class="a rowbg" style="top:405px;background:#ffffff"></div>
<svg class="a" style="left:356px;top:406px" width="15" height="15" viewBox="0 0 15 15"><path d="M3.500 0.500 L10.500 0.500 L13.500 3.500 L13.500 13.500 L3.500 13.500 Z" fill="#fff" stroke="#86a8d6" stroke-width="1"/><path d="M5 2 H10 V4.500 H12 V12 H5 Z" fill="#dfe7f2"/><path d="M10.500 0.500 L10.500 3.500 L13.500 3.500" fill="#fff" stroke="#86a8d6" stroke-width="1"/><path d="M0.800 6.900 C3.500 6.800 6.500 7.600 8.600 10.200 L9.600 11.200 L8.300 14.200 L4 14.400 C5.800 13 6.300 11.800 5.300 10.400 C4.200 8.800 2.500 7.700 0.800 7.500 Z" fill="#2e63d9"/><path d="M4 14.400 C5.800 13 6.300 11.800 5.300 10.400 L6.500 12 L6 14.300 Z" fill="#7ea6ee"/><circle cx="9.100" cy="7.800" r="2.900" fill="#e5080f"/><circle cx="8.500" cy="6.700" r="0.900" fill="#ffd0d0"/></svg>
<div class="a tx" style="left:381px;top:405px">Hourly Sales Trend (No of Transactions)</div><div class="a tx" style="left:682px;top:405px;letter-spacing:-.2px">Administrator</div>
<div class="a rowbg" style="top:423px;background:#e8e8fc"></div>
<svg class="a" style="left:356px;top:424px" width="15" height="15" viewBox="0 0 15 15"><path d="M3.500 0.500 L10.500 0.500 L13.500 3.500 L13.500 13.500 L3.500 13.500 Z" fill="#fff" stroke="#86a8d6" stroke-width="1"/><path d="M5 2 H10 V4.500 H12 V12 H5 Z" fill="#dfe7f2"/><path d="M10.500 0.500 L10.500 3.500 L13.500 3.500" fill="#fff" stroke="#86a8d6" stroke-width="1"/><path d="M0.800 6.900 C3.500 6.800 6.500 7.600 8.600 10.200 L9.600 11.200 L8.300 14.200 L4 14.400 C5.800 13 6.300 11.800 5.300 10.400 C4.200 8.800 2.500 7.700 0.800 7.500 Z" fill="#2e63d9"/><path d="M4 14.400 C5.800 13 6.300 11.800 5.300 10.400 L6.500 12 L6 14.300 Z" fill="#7ea6ee"/><circle cx="9.100" cy="7.800" r="2.900" fill="#e5080f"/><circle cx="8.500" cy="6.700" r="0.900" fill="#ffd0d0"/></svg>
<div class="a tx" style="left:381px;top:423px">Hourly Sales Trend (Sales Units)</div><div class="a tx" style="left:682px;top:423px;letter-spacing:-.2px">Administrator</div>
<div class="a rowbg" style="top:441px;background:#ffffff"></div>
<svg class="a" style="left:356px;top:442px" width="15" height="15" viewBox="0 0 15 15"><path d="M3.500 0.500 L10.500 0.500 L13.500 3.500 L13.500 13.500 L3.500 13.500 Z" fill="#fff" stroke="#86a8d6" stroke-width="1"/><path d="M5 2 H10 V4.500 H12 V12 H5 Z" fill="#dfe7f2"/><path d="M10.500 0.500 L10.500 3.500 L13.500 3.500" fill="#fff" stroke="#86a8d6" stroke-width="1"/><path d="M0.800 6.900 C3.500 6.800 6.500 7.600 8.600 10.200 L9.600 11.200 L8.300 14.200 L4 14.400 C5.800 13 6.300 11.800 5.300 10.400 C4.200 8.800 2.500 7.700 0.800 7.500 Z" fill="#2e63d9"/><path d="M4 14.400 C5.800 13 6.300 11.800 5.300 10.400 L6.500 12 L6 14.300 Z" fill="#7ea6ee"/><circle cx="9.100" cy="7.800" r="2.900" fill="#e5080f"/><circle cx="8.500" cy="6.700" r="0.900" fill="#ffd0d0"/></svg>
<div class="a tx" style="left:381px;top:441px">Hourly Sales Trend (Sales Value)</div><div class="a tx" style="left:682px;top:441px;letter-spacing:-.2px">Administrator</div>
<div class="a rowbg" style="top:459px;background:#e8e8fc"></div>
<svg class="a" style="left:356px;top:460px" width="15" height="15" viewBox="0 0 15 15"><path d="M3.500 0.500 L10.500 0.500 L13.500 3.500 L13.500 13.500 L3.500 13.500 Z" fill="#fff" stroke="#86a8d6" stroke-width="1"/><path d="M5 2 H10 V4.500 H12 V12 H5 Z" fill="#dfe7f2"/><path d="M10.500 0.500 L10.500 3.500 L13.500 3.500" fill="#fff" stroke="#86a8d6" stroke-width="1"/><path d="M0.800 6.900 C3.500 6.800 6.500 7.600 8.600 10.200 L9.600 11.200 L8.300 14.200 L4 14.400 C5.800 13 6.300 11.800 5.300 10.400 C4.200 8.800 2.500 7.700 0.800 7.500 Z" fill="#2e63d9"/><path d="M4 14.400 C5.800 13 6.300 11.800 5.300 10.400 L6.500 12 L6 14.300 Z" fill="#7ea6ee"/><circle cx="9.100" cy="7.800" r="2.900" fill="#e5080f"/><circle cx="8.500" cy="6.700" r="0.900" fill="#ffd0d0"/></svg>
<div class="a tx" style="left:381px;top:459px">Hourly Transaction Profile</div><div class="a tx" style="left:682px;top:459px;letter-spacing:-.2px">Administrator</div>
<div class="a rowbg" style="top:477px;background:#ffffff"></div>
<svg class="a" style="left:356px;top:478px" width="15" height="15" viewBox="0 0 15 15"><path d="M3.500 0.500 L10.500 0.500 L13.500 3.500 L13.500 13.500 L3.500 13.500 Z" fill="#fff" stroke="#86a8d6" stroke-width="1"/><path d="M5 2 H10 V4.500 H12 V12 H5 Z" fill="#dfe7f2"/><path d="M10.500 0.500 L10.500 3.500 L13.500 3.500" fill="#fff" stroke="#86a8d6" stroke-width="1"/><path d="M0.800 6.900 C3.500 6.800 6.500 7.600 8.600 10.200 L9.600 11.200 L8.300 14.200 L4 14.400 C5.800 13 6.300 11.800 5.300 10.400 C4.200 8.800 2.500 7.700 0.800 7.500 Z" fill="#2e63d9"/><path d="M4 14.400 C5.800 13 6.300 11.800 5.300 10.400 L6.500 12 L6 14.300 Z" fill="#7ea6ee"/><circle cx="9.100" cy="7.800" r="2.900" fill="#e5080f"/><circle cx="8.500" cy="6.700" r="0.900" fill="#ffd0d0"/></svg>
<div class="a tx" style="left:381px;top:477px">Location Sales Scorecard (Local)</div><div class="a tx" style="left:682px;top:477px;letter-spacing:-.2px">Administrator</div>
<div class="a rowbg" style="top:495px;background:#e8e8fc"></div>
<svg class="a" style="left:356px;top:496px" width="15" height="15" viewBox="0 0 15 15"><path d="M3.500 0.500 L10.500 0.500 L13.500 3.500 L13.500 13.500 L3.500 13.500 Z" fill="#fff" stroke="#86a8d6" stroke-width="1"/><path d="M5 2 H10 V4.500 H12 V12 H5 Z" fill="#dfe7f2"/><path d="M10.500 0.500 L10.500 3.500 L13.500 3.500" fill="#fff" stroke="#86a8d6" stroke-width="1"/><path d="M0.800 6.900 C3.500 6.800 6.500 7.600 8.600 10.200 L9.600 11.200 L8.300 14.200 L4 14.400 C5.800 13 6.300 11.800 5.300 10.400 C4.200 8.800 2.500 7.700 0.800 7.500 Z" fill="#2e63d9"/><path d="M4 14.400 C5.800 13 6.300 11.800 5.300 10.400 L6.500 12 L6 14.300 Z" fill="#7ea6ee"/><circle cx="9.100" cy="7.800" r="2.900" fill="#e5080f"/><circle cx="8.500" cy="6.700" r="0.900" fill="#ffd0d0"/></svg>
<div class="a tx" style="left:381px;top:495px">Sales Comparison</div><div class="a tx" style="left:682px;top:495px;letter-spacing:-.2px">Administrator</div>
<div class="a rowbg" style="top:513px;background:#ffffff"></div>
<svg class="a" style="left:356px;top:514px" width="15" height="15" viewBox="0 0 15 15"><path d="M3.500 0.500 L10.500 0.500 L13.500 3.500 L13.500 13.500 L3.500 13.500 Z" fill="#fff" stroke="#86a8d6" stroke-width="1"/><path d="M5 2 H10 V4.500 H12 V12 H5 Z" fill="#dfe7f2"/><path d="M10.500 0.500 L10.500 3.500 L13.500 3.500" fill="#fff" stroke="#86a8d6" stroke-width="1"/><path d="M0.800 6.900 C3.500 6.800 6.500 7.600 8.600 10.200 L9.600 11.200 L8.300 14.200 L4 14.400 C5.800 13 6.300 11.800 5.300 10.400 C4.200 8.800 2.500 7.700 0.800 7.500 Z" fill="#2e63d9"/><path d="M4 14.400 C5.800 13 6.300 11.800 5.300 10.400 L6.500 12 L6 14.300 Z" fill="#7ea6ee"/><circle cx="9.100" cy="7.800" r="2.900" fill="#e5080f"/><circle cx="8.500" cy="6.700" r="0.900" fill="#ffd0d0"/></svg>
<div class="a tx" style="left:381px;top:513px">Store Contribution Region</div><div class="a tx" style="left:682px;top:513px;letter-spacing:-.2px">Administrator</div>
<div class="a rowbg" style="top:531px;background:#e8e8fc"></div>
<svg class="a" style="left:356px;top:532px" width="15" height="15" viewBox="0 0 15 15"><path d="M3.500 0.500 L10.500 0.500 L13.500 3.500 L13.500 13.500 L3.500 13.500 Z" fill="#fff" stroke="#86a8d6" stroke-width="1"/><path d="M5 2 H10 V4.500 H12 V12 H5 Z" fill="#dfe7f2"/><path d="M10.500 0.500 L10.500 3.500 L13.500 3.500" fill="#fff" stroke="#86a8d6" stroke-width="1"/><path d="M0.800 6.900 C3.500 6.800 6.500 7.600 8.600 10.200 L9.600 11.200 L8.300 14.200 L4 14.400 C5.800 13 6.300 11.800 5.300 10.400 C4.200 8.800 2.500 7.700 0.800 7.500 Z" fill="#2e63d9"/><path d="M4 14.400 C5.800 13 6.300 11.800 5.300 10.400 L6.500 12 L6 14.300 Z" fill="#7ea6ee"/><circle cx="9.100" cy="7.800" r="2.900" fill="#e5080f"/><circle cx="8.500" cy="6.700" r="0.900" fill="#ffd0d0"/></svg>
<div class="a tx" style="left:381px;top:531px">Store Over or Short</div><div class="a tx" style="left:682px;top:531px;letter-spacing:-.2px">Administrator</div>
<div class="a rowbg" style="top:549px;background:#ffffff"></div>
<svg class="a" style="left:356px;top:550px" width="15" height="15" viewBox="0 0 15 15"><path d="M3.500 0.500 L10.500 0.500 L13.500 3.500 L13.500 13.500 L3.500 13.500 Z" fill="#fff" stroke="#86a8d6" stroke-width="1"/><path d="M5 2 H10 V4.500 H12 V12 H5 Z" fill="#dfe7f2"/><path d="M10.500 0.500 L10.500 3.500 L13.500 3.500" fill="#fff" stroke="#86a8d6" stroke-width="1"/><path d="M0.800 6.900 C3.500 6.800 6.500 7.600 8.600 10.200 L9.600 11.200 L8.300 14.200 L4 14.400 C5.800 13 6.300 11.800 5.300 10.400 C4.200 8.800 2.500 7.700 0.800 7.500 Z" fill="#2e63d9"/><path d="M4 14.400 C5.800 13 6.300 11.800 5.300 10.400 L6.500 12 L6 14.300 Z" fill="#7ea6ee"/><circle cx="9.100" cy="7.800" r="2.900" fill="#e5080f"/><circle cx="8.500" cy="6.700" r="0.900" fill="#ffd0d0"/></svg>
<div class="a tx" style="left:381px;top:549px">Store Performance Trend</div><div class="a tx" style="left:682px;top:549px;letter-spacing:-.2px">Administrator</div>
<div class="a rowbg" style="top:567px;background:#e8e8fc"></div>
<svg class="a" style="left:356px;top:568px" width="15" height="15" viewBox="0 0 15 15"><path d="M3.500 0.500 L10.500 0.500 L13.500 3.500 L13.500 13.500 L3.500 13.500 Z" fill="#fff" stroke="#86a8d6" stroke-width="1"/><path d="M5 2 H10 V4.500 H12 V12 H5 Z" fill="#dfe7f2"/><path d="M10.500 0.500 L10.500 3.500 L13.500 3.500" fill="#fff" stroke="#86a8d6" stroke-width="1"/><path d="M0.800 6.900 C3.500 6.800 6.500 7.600 8.600 10.200 L9.600 11.200 L8.300 14.200 L4 14.400 C5.800 13 6.300 11.800 5.300 10.400 C4.200 8.800 2.500 7.700 0.800 7.500 Z" fill="#2e63d9"/><path d="M4 14.400 C5.800 13 6.300 11.800 5.300 10.400 L6.500 12 L6 14.300 Z" fill="#7ea6ee"/><circle cx="9.100" cy="7.800" r="2.900" fill="#e5080f"/><circle cx="8.500" cy="6.700" r="0.900" fill="#ffd0d0"/></svg>
<div class="a tx" style="left:381px;top:567px">Store Ranking (Area)</div><div class="a tx" style="left:682px;top:567px;letter-spacing:-.2px">Administrator</div>
<div class="a rowbg" style="top:585px;background:#ffffff"></div>
<svg class="a" style="left:356px;top:586px" width="15" height="15" viewBox="0 0 15 15"><path d="M3.500 0.500 L10.500 0.500 L13.500 3.500 L13.500 13.500 L3.500 13.500 Z" fill="#fff" stroke="#86a8d6" stroke-width="1"/><path d="M5 2 H10 V4.500 H12 V12 H5 Z" fill="#dfe7f2"/><path d="M10.500 0.500 L10.500 3.500 L13.500 3.500" fill="#fff" stroke="#86a8d6" stroke-width="1"/><path d="M0.800 6.900 C3.500 6.800 6.500 7.600 8.600 10.200 L9.600 11.200 L8.300 14.200 L4 14.400 C5.800 13 6.300 11.800 5.300 10.400 C4.200 8.800 2.500 7.700 0.800 7.500 Z" fill="#2e63d9"/><path d="M4 14.400 C5.800 13 6.300 11.800 5.300 10.400 L6.500 12 L6 14.300 Z" fill="#7ea6ee"/><circle cx="9.100" cy="7.800" r="2.900" fill="#e5080f"/><circle cx="8.500" cy="6.700" r="0.900" fill="#ffd0d0"/></svg>
<div class="a tx" style="left:381px;top:585px">Store Traffic- Conversion Rate (Day)</div><div class="a tx" style="left:682px;top:585px;letter-spacing:-.2px">Administrator</div>
<div class="a rowbg" style="top:603px;background:#e8e8fc"></div>
<svg class="a" style="left:356px;top:604px" width="15" height="15" viewBox="0 0 15 15"><path d="M3.500 0.500 L10.500 0.500 L13.500 3.500 L13.500 13.500 L3.500 13.500 Z" fill="#fff" stroke="#86a8d6" stroke-width="1"/><path d="M5 2 H10 V4.500 H12 V12 H5 Z" fill="#dfe7f2"/><path d="M10.500 0.500 L10.500 3.500 L13.500 3.500" fill="#fff" stroke="#86a8d6" stroke-width="1"/><path d="M0.800 6.900 C3.500 6.800 6.500 7.600 8.600 10.200 L9.600 11.200 L8.300 14.200 L4 14.400 C5.800 13 6.300 11.800 5.300 10.400 C4.200 8.800 2.500 7.700 0.800 7.500 Z" fill="#2e63d9"/><path d="M4 14.400 C5.800 13 6.300 11.800 5.300 10.400 L6.500 12 L6 14.300 Z" fill="#7ea6ee"/><circle cx="9.100" cy="7.800" r="2.900" fill="#e5080f"/><circle cx="8.500" cy="6.700" r="0.900" fill="#ffd0d0"/></svg>
<div class="a tx" style="left:381px;top:603px">Store Traffic- Conversion Rate (Week)</div><div class="a tx" style="left:682px;top:603px;letter-spacing:-.2px">Administrator</div>
<div class="a bl" style="left:379px;top:332px;width:478px;height:1px"></div>
<div class="a bl" style="left:379px;top:350px;width:478px;height:1px"></div>
<div class="a bl" style="left:379px;top:368px;width:478px;height:1px"></div>
<div class="a bl" style="left:379px;top:386px;width:478px;height:1px"></div>
<div class="a bl" style="left:379px;top:404px;width:478px;height:1px"></div>
<div class="a bl" style="left:379px;top:422px;width:478px;height:1px"></div>
<div class="a bl" style="left:379px;top:440px;width:478px;height:1px"></div>
<div class="a bl" style="left:379px;top:458px;width:478px;height:1px"></div>
<div class="a bl" style="left:379px;top:476px;width:478px;height:1px"></div>
<div class="a bl" style="left:379px;top:494px;width:478px;height:1px"></div>
<div class="a bl" style="left:379px;top:512px;width:478px;height:1px"></div>
<div class="a bl" style="left:379px;top:530px;width:478px;height:1px"></div>
<div class="a bl" style="left:379px;top:548px;width:478px;height:1px"></div>
<div class="a bl" style="left:379px;top:566px;width:478px;height:1px"></div>
<div class="a bl" style="left:379px;top:584px;width:478px;height:1px"></div>
<div class="a bl" style="left:379px;top:602px;width:478px;height:1px"></div>
<div class="a bl" style="left:379px;top:620px;width:478px;height:1px"></div>
<div class="a bl" style="left:379px;top:332px;width:1px;height:289px"></div>
<div class="a bl" style="left:679px;top:332px;width:1px;height:289px"></div>
</body>
</html>
